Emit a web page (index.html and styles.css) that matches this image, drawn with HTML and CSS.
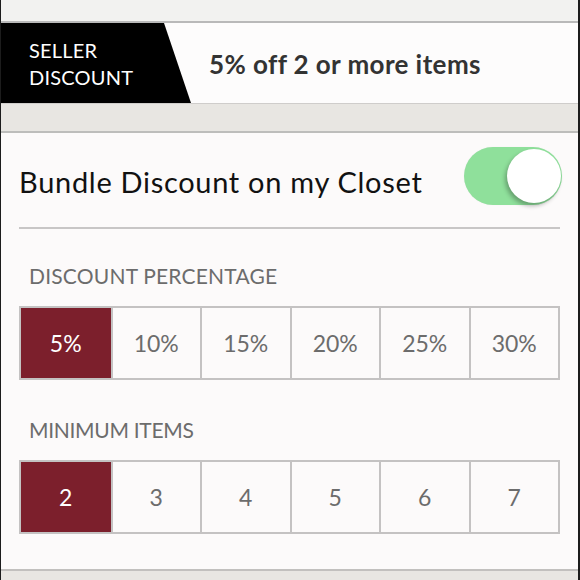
FILE: index.html
```html
<!DOCTYPE html>
<html lang="en">
<head>
    <meta charset="UTF-8">
    <meta name="viewport" content="width=device-width, initial-scale=1.0">
    <title>Bundle Discount</title>
    <link rel="stylesheet" href="styles.css">
</head>
<body>
    <div class="screen">
        <div class="top-strip"></div>

        <div class="banner">
            <div class="banner-tag">SELLER<br>DISCOUNT</div>
            <div class="banner-text">5% off 2 or more items</div>
        </div>

        <div class="spacer"></div>

        <div class="panel">
            <div class="toggle-row">
                <span class="toggle-label">Bundle Discount on my Closet</span>
                <div class="toggle on"><div class="knob"></div></div>
            </div>
            <div class="divider"></div>

            <div class="section-label label-pct">DISCOUNT PERCENTAGE</div>
            <div class="segments">
                <div class="seg selected">5%</div>
                <div class="seg">10%</div>
                <div class="seg">15%</div>
                <div class="seg">20%</div>
                <div class="seg">25%</div>
                <div class="seg">30%</div>
            </div>

            <div class="section-label label-min">MINIMUM ITEMS</div>
            <div class="segments">
                <div class="seg selected">2</div>
                <div class="seg">3</div>
                <div class="seg">4</div>
                <div class="seg">5</div>
                <div class="seg">6</div>
                <div class="seg">7</div>
            </div>
        </div>

        <div class="bottom-strip"></div>
    </div>
</body>
</html>
```

FILE: styles.css
```css
:root { --maroon: #7c1f2c; --seg-border: #c4c2c2; --label: #6c6c6c; --panel: #fcfafa; --strip: #e8e6e2; }
html, body { margin: 0; height: 100%; }
body { font-family: Lato, "Open Sans", sans-serif; background: #1c1c1c; }
.screen { height: 580px; margin: 0 2px 0 1px; background: var(--strip); display: flex; flex-direction: column; overflow: hidden; }
.top-strip { height: 21px; background: #f2f2f0; border-bottom: 2px solid #b9b9b9; flex-shrink: 0; }
.banner { height: 80px; background: #fdfcfc; display: flex; align-items: center; border-bottom: 1px solid #cfcdcb; flex-shrink: 0; }
.banner-tag { align-self: stretch; width: 190px; background: #000; color: #fff; clip-path: polygon(0 0, 163px 0, 190px 100%, 0 100%); padding-left: 28px; box-sizing: border-box; display: flex; align-items: center; font-size: 20px; line-height: 27px; padding-top: 2px; letter-spacing: 0.2px; }
.banner-text { margin-left: 18px; font-size: 26px; font-weight: 700; color: #333; padding-top: 2px; letter-spacing: 0.4px; }
.spacer { height: 27px; background: var(--strip); border-bottom: 2px solid #bdbdbb; flex-shrink: 0; }
.panel { background: var(--panel); height: 438px; padding: 0 18px 0 18px; box-sizing: border-box; border-bottom: 2px solid #c2c0be; flex-shrink: 0; }
.toggle-row { height: 94px; display: flex; align-items: center; justify-content: space-between; }
.toggle-label { font-size: 29px; color: #111; padding-top: 2px; letter-spacing: 0.7px; }
.toggle { width: 98px; height: 58px; border-radius: 29px; background: #8fe09b; position: relative; margin: -9px -2px 0 0; box-shadow: 0 0 1px rgba(0,0,0,0.1); }
.knob { position: absolute; right: 1px; top: 2px; width: 54px; height: 54px; border-radius: 50%; background: #fff; box-shadow: -2px 3px 4px rgba(0,0,0,0.28); }
.divider { height: 2px; background: #c8c6c6; }
.section-label { color: var(--label); font-size: 21px; padding-left: 10px; letter-spacing: 0.2px; }
.label-pct { margin-top: 34px; margin-bottom: 18px; }
.label-min { margin-top: 37px; margin-bottom: 18px; letter-spacing: -0.3px; }
.segments { display: grid; grid-template-columns: repeat(6, 1fr); border: 2px solid var(--seg-border); height: 74px; box-sizing: border-box; }
.seg { display: flex; align-items: center; justify-content: center; font-size: 23px; color: var(--label); border-left: 2px solid var(--seg-border); }
.seg:first-child { border-left: none; }
.seg.selected { background: var(--maroon); color: #fff; }
.bottom-strip { flex: 1; background: var(--strip); }
```
